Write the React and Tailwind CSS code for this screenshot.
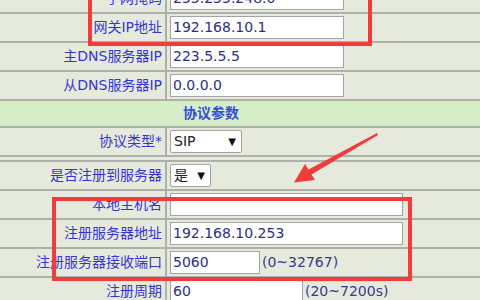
import React from 'react';

const LINE = 'border-b-2 border-[#aeb0aa]';

function Field({ value, width }) {
  return (
    <div
      className="h-[23px] bg-white border border-[#a3a3a3] flex items-center pl-[2px] text-[14px] text-[#2e2e80]"
      style={{ width }}
    >
      {value}
    </div>
  );
}

function Select({ value, width }) {
  return (
    <div
      className="h-[23px] bg-white border border-[#a3a3a3] rounded-[2px] flex items-center justify-between pl-[3px] pr-[5px] text-[14px] text-[#222]"
      style={{ width }}
    >
      <span>{value}</span>
      <span className="text-[10px] text-[#111]">▼</span>
    </div>
  );
}

function Row({ label, children, className = LINE }) {
  return (
    <div className={`flex h-[29px] ${className}`}>
      <div className="w-[167px] shrink-0 border-r-2 border-[#aeb0aa] flex items-center justify-end pr-[3px] text-[14px] text-[#3535d6] whitespace-nowrap">
        {label}
      </div>
      <div className="flex-1 flex items-center pl-[3px] gap-[2px] text-[14px] text-[#3a3a8c] whitespace-nowrap">
        {children}
      </div>
    </div>
  );
}

export default function App() {
  return (
    <div
      className="relative w-[480px] h-[300px] overflow-hidden bg-[#e6eadc]"
      style={{ fontFamily: '"DejaVu Sans", "Noto Sans CJK SC", sans-serif' }}
    >
      <div className="-mt-[15px]">
        <Row label="子网掩码"><Field value="255.255.248.0" width={174} /></Row>
        <Row label="网关IP地址"><Field value="192.168.10.1" width={174} /></Row>
        <Row label="主DNS服务器IP"><Field value="223.5.5.5" width={174} /></Row>
        <Row label="从DNS服务器IP"><Field value="0.0.0.0" width={174} /></Row>

        <div className={`h-[27px] bg-[#d6eec7] flex items-center pl-[183px] text-[14px] font-bold text-[#3050d8] ${LINE}`}>
          协议参数
        </div>

        <Row label="协议类型*"><Select value="SIP" width={72} /></Row>
        <div className="h-[3px]" />
        <div className="border-t-2 border-[#aeb0aa]">
          <Row label="是否注册到服务器"><Select value="是" width={41} /></Row>
          <Row label="本地主机名"><Field value="" width={233} /></Row>
          <Row label="注册服务器地址"><Field value="192.168.10.253" width={233} /></Row>
          <Row label="注册服务器接收端口">
            <Field value="5060" width={90} />
            <span>(0~32767)</span>
          </Row>
          <Row label="注册周期">
            <Field value="60" width={133} />
            <span>(20~7200s)</span>
          </Row>
        </div>
      </div>

      {/* annotation boxes */}
      <div className="absolute left-[88px] top-[-10px] w-[284px] h-[56px] border-4 border-[#f23b3b]" />
      <div className="absolute left-[52px] top-[197px] w-[360px] h-[84px] border-4 border-[#f23b3b]" />

      {/* annotation arrow */}
      <svg className="absolute left-0 top-0" width="480" height="300" viewBox="0 0 480 300">
        <polygon
          points="377,133 308.5,169.4 305,164 294,182.5 315,180 311.5,174.6 378,135"
          fill="#f23b3b"
        />
      </svg>
    </div>
  );
}
